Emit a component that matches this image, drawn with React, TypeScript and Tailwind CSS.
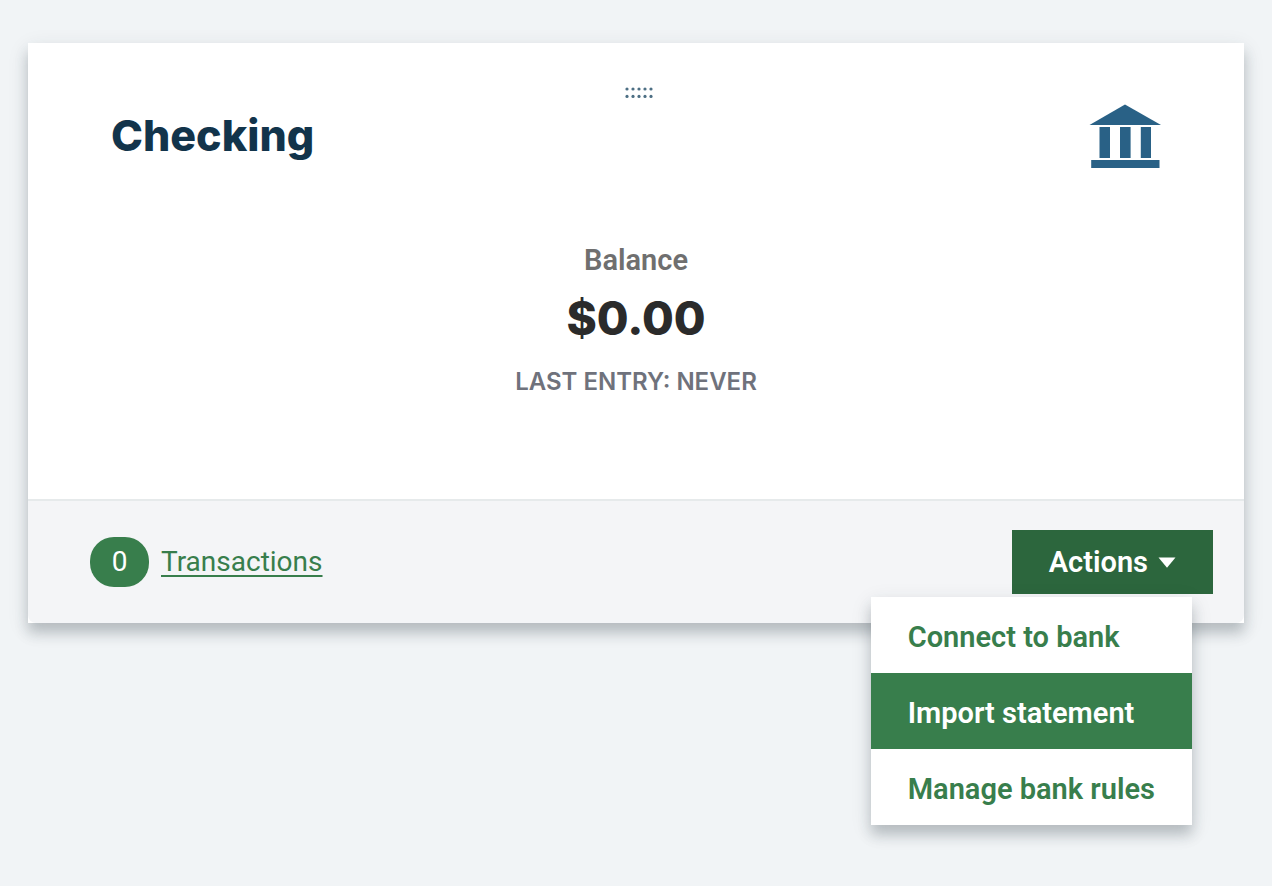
import { useState } from "react";

const MENU_ITEMS = ["Connect to bank", "Import statement", "Manage bank rules"];

function DragHandle() {
  return (
    <svg width="30" height="12" viewBox="0 0 30 12" fill="#4d6f84" aria-hidden="true">
      {[3, 9, 15, 21, 27].map((x) => (
        <g key={x}>
          <circle cx={x} cy="2" r="1.6" />
          <circle cx={x} cy="9.4" r="1.6" />
        </g>
      ))}
    </svg>
  );
}

function BankIcon() {
  return (
    <svg width="72" height="64" viewBox="0 0 72 64" fill="#296186" aria-hidden="true">
      <path d="M36 0.5 L72 21 H0.5 Z" />
      <path d="M10.5 23H21V54H10.5Z M31 23H41.6V54H31Z M51.8 23H62V54H51.8Z" />
      <path d="M2.2 56H70.5V64H2.2Z" />
    </svg>
  );
}

function ActionsMenu() {
  const [open, setOpen] = useState(true);
  const [active, setActive] = useState("Import statement");

  return (
    <div className="relative">
      <button
        type="button"
        aria-haspopup="menu"
        aria-expanded={open}
        onClick={() => setOpen(!open)}
        className="flex h-16 items-center gap-2.5 bg-[#2c663d] px-[37px] text-[29px] leading-8 font-semibold text-white"
      >
        Actions
        <svg width="18" height="11" viewBox="0 0 18 11" fill="currentColor" aria-hidden="true">
          <path d="M0.5 0.5H17.5L9 10.8Z" />
        </svg>
      </button>
      {open && (
        <div
          role="menu"
          className="absolute top-full right-[21px] mt-[3px] bg-white shadow-[0_10px_12px_rgba(40,55,65,0.22),0_6px_20px_rgba(40,55,65,0.12)]"
        >
          {MENU_ITEMS.map((item) => (
            <button
              key={item}
              type="button"
              role="menuitem"
              onMouseEnter={() => setActive(item)}
              className={`block h-[76px] w-full px-[37px] pt-1 text-left text-[29px] leading-8 font-semibold whitespace-nowrap ${
                item === active ? "bg-[#387e4c] text-white" : "text-[#387e4c]"
              }`}
            >
              {item}
            </button>
          ))}
        </div>
      )}
    </div>
  );
}

export default function App() {
  return (
    <main className="min-h-screen bg-[#f1f4f6] px-7 pt-[43px] font-['Roboto',sans-serif]">
      <article className="bg-white shadow-[0_10px_12px_rgba(40,55,65,0.22),0_6px_20px_rgba(40,55,65,0.12)]">
        <div className="flex justify-center pt-11 pl-1.5">
          <DragHandle />
        </div>
        <header className="flex items-start justify-between pr-[83px] pl-[83px]">
          <h2 className="pt-2.5 font-['Inter',sans-serif] text-[43px] leading-[52px] font-extrabold text-[#12344b]">Checking</h2>
          <div className="pt-[5px]">
            <BankIcon />
          </div>
        </header>
        <div className="flex flex-col items-center pt-[76px] pb-[101px]">
          <p className="text-[29px] leading-8 font-semibold text-[#6f6f6f]">Balance</p>
          <p className="pt-3 font-['Inter',sans-serif] text-[46px] leading-[60px] font-extrabold text-[#2b2b2b]">$0.00</p>
          <p className="pt-[18px] font-['Inter',sans-serif] text-2xl leading-8 font-semibold text-[#6f727c] uppercase">
            Last entry: Never
          </p>
        </div>
        <footer className="flex items-center justify-between rounded-b-lg border-t-2 border-[#e6eaeb] bg-[#f4f5f7] pt-[29px] pr-[31px] pb-[29px] pl-[62px]">
          <a href="#transactions" className="flex items-center gap-3 text-[28px] leading-8 text-[#387e4c]">
            <span className="flex h-[50px] w-[59px] items-center justify-center rounded-3xl bg-[#387e4c] text-white">0</span>
            <span className="underline decoration-2 underline-offset-4">Transactions</span>
          </a>
          <ActionsMenu />
        </footer>
      </article>
    </main>
  );
}
